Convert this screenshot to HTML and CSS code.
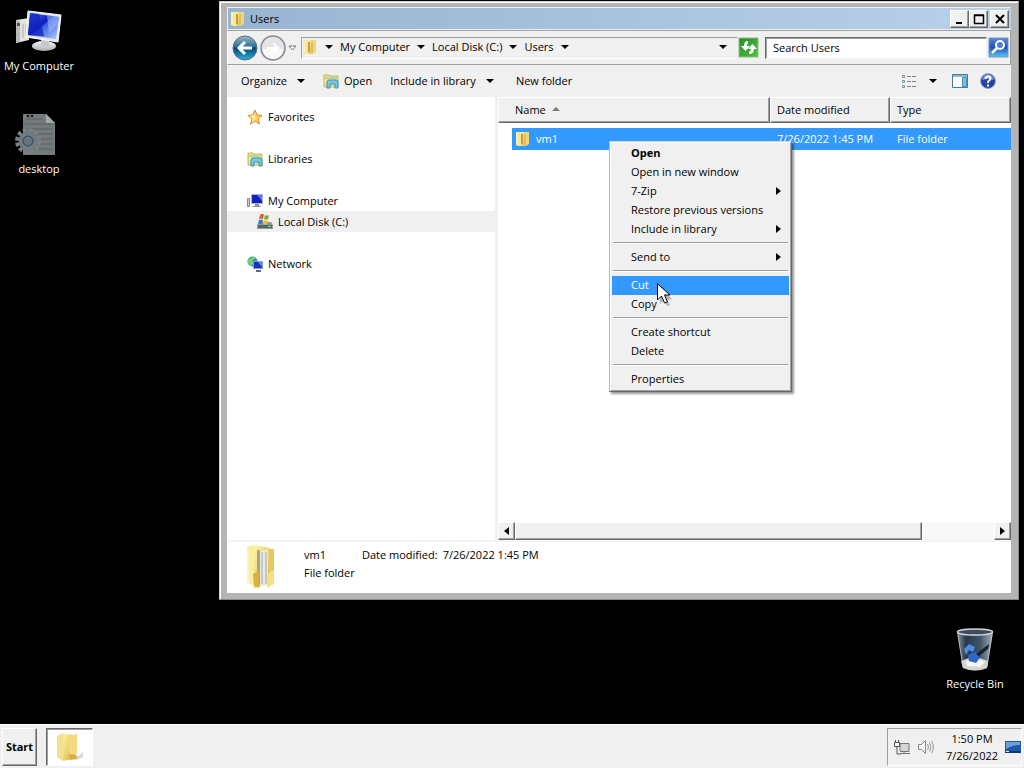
FILE: index.html
```
<!DOCTYPE html>
<html lang="en">
<head>
<meta charset="utf-8">
<title>Users</title>
<link rel="stylesheet" href="styles.css">
</head>
<body>
<svg class="defs" aria-hidden="true">
  <defs>
    <linearGradient id="gold" x1="0" x2="1" y1="0" y2="1"><stop offset="0" stop-color="#fff3a6"/><stop offset=".6" stop-color="#ecd06b"/><stop offset="1" stop-color="#cfa63a"/></linearGradient>
    <linearGradient id="screen" x1="0" x2="1" y1="0" y2="1"><stop offset="0" stop-color="#5c7fe8"/><stop offset=".45" stop-color="#0a18c0"/><stop offset=".5" stop-color="#3a5ee0"/><stop offset="1" stop-color="#b4d4fa"/></linearGradient>
    <linearGradient id="metal" x1="0" x2="0" y1="0" y2="1"><stop offset="0" stop-color="#f8f8f8"/><stop offset="1" stop-color="#a9adb0"/></linearGradient>
    <linearGradient id="back" x1="0" x2="0" y1="0" y2="1"><stop offset="0" stop-color="#9db8c8"/><stop offset=".45" stop-color="#2b6f9b"/><stop offset=".5" stop-color="#07446f"/><stop offset="1" stop-color="#29b4e4"/></linearGradient>
    <linearGradient id="green" x1="0" x2="1" y1="0" y2="1"><stop offset="0" stop-color="#2a8a2c"/><stop offset="1" stop-color="#52c440"/></linearGradient>
    <linearGradient id="find" x1="0" x2="0" y1="0" y2="1"><stop offset="0" stop-color="#5b86d8"/><stop offset=".5" stop-color="#2350b8"/><stop offset="1" stop-color="#58c8ec"/></linearGradient>
    <linearGradient id="glass" x1="0" x2="1" y1="0" y2="0"><stop offset="0" stop-color="#8b99a4"/><stop offset=".25" stop-color="#27384c"/><stop offset=".65" stop-color="#41566a"/><stop offset="1" stop-color="#a9b3ba"/></linearGradient>
  </defs>
  <symbol id="folder" viewBox="0 0 16 16">
    <path d="M1 1h5v14H3l-2-1z" fill="#f7e79a"/><path d="M6 1h5v14H6z" fill="url(#gold)"/><path d="M6 3h2v10H6z" fill="#c69b41"/><path d="M9 1h5v12l-3 2H9z" fill="#f0d677"/><path d="M10 3v11" stroke="#cda64c"/><path d="M2 2v11" stroke="#fffbd6"/>
  </symbol>
  <symbol id="library" viewBox="0 0 16 16">
    <path d="M1 2h5l1 1h8v11H1z" fill="#f0df83" stroke="#c9b75e"/><path d="M2 4h12v2H2z" fill="#a9dba3"/><path d="M2 7h12v2H2z" fill="#f9efb0"/><path d="M4 15V9q0-2 2-2h7q2 0 2 2v6h-3v-4H7v4z" fill="#76c9e5" stroke="#3a8fb5"/>
  </symbol>
  <symbol id="caret" viewBox="0 0 8 4"><path d="M0 0h8L4 4z" fill="currentColor"/></symbol>
  <symbol id="side" viewBox="0 0 5 8"><path d="M0 0v8l5-4z" fill="currentColor"/></symbol>
</svg>

<main class="desktop">
  <div class="shortcuts">
    <a class="shortcut" href="#computer">
      <svg class="shortcut-icon" viewBox="0 0 48 48">
        <path d="M1 11 14 9v22L1 34z" fill="#e3e3df"/><path d="M1 11 5 12v21l-4 1z" fill="#b9b9b5"/><path d="M2 14h3v3H2z" fill="#555"/><path d="M8 15v14M11 15v12" stroke="#aaa"/>
        <ellipse cx="29" cy="37" rx="12" ry="5" fill="url(#metal)"/><path d="M26 30h8v7h-8z" fill="#c5c9cc"/>
        <path d="m13 2 33 4-3 27-32-5z" fill="#e2e5e6" stroke="#fff"/><path d="m15 4 29 4-3 22-28-4z" fill="url(#screen)"/><path d="m15 4 9 1 5 22-16-1z" fill="#1024bd" opacity=".75"/><path d="m32 6 12 2-1 7-9 9z" fill="#a4bdf8" opacity=".55"/>
      </svg>
      <span>My Computer</span>
    </a>
    <a class="shortcut" href="#desktop">
      <svg class="shortcut-icon" viewBox="0 0 48 48">
        <path d="M8 2h23l9 9v32H8z" fill="#747a7b"/><path d="M31 2v9h9z" fill="#a5a9aa"/><path d="M11 4h8M11 7h17M10 12h28M10 17h28M10 22h28M10 27h28M10 32h28M10 37h28" stroke="#5a6062"/><path d="M12 4h2M16 4h2" stroke="#111" stroke-width="2"/>
        <circle cx="13" cy="29" r="11" fill="none" stroke="#788287" stroke-width="4" stroke-dasharray="3.6 2.2"/><circle cx="13" cy="29" r="8" fill="#7e888c" stroke="#6f7a81" stroke-width="3"/><circle cx="13" cy="29" r="5" fill="#6a757b" stroke="#3e5363" stroke-width="1.5"/>
      </svg>
      <span>desktop</span>
    </a>
  </div>

  <a class="shortcut recycle" href="#recycle">
    <svg class="shortcut-icon" viewBox="0 0 48 48">
      <path d="M6 5h36l-6 36q-12 5-24 0z" fill="url(#glass)"/><path d="M10 34q13-7 27 0l-1 7q-12 5-24 0z" fill="#d3d5d4"/><path d="m15 34 8-3 11 4-5 5-13-1z" fill="#f5f5f2"/>
      <path d="m13 22 5-5 6 3-2 5-4-2-3 5z" fill="#4c8ce4"/><path d="m17 28 7-3 3 1 1 6-3 4-7-2z" fill="#2b66c9"/><path d="m25 27 13-10-1 5-9 7z" fill="#17202c"/><ellipse cx="24" cy="5" rx="17.500" ry="3" fill="#3d4d5e" stroke="#cfd6da" stroke-width="1.500"/><path d="m7 8 5 32M41 8l-5 32" stroke="#c9d0d4" opacity=".7"/>
    </svg>
    <span>Recycle Bin</span>
  </a>

  <section class="window" aria-label="Users">
    <header class="titlebar">
      <svg class="icon"><use href="#folder"/></svg>
      <h1>Users</h1>
      <div class="controls">
        <button aria-label="Minimize"><svg viewBox="0 0 12 12"><path d="M2 10h6" stroke="#000" stroke-width="2"/></svg></button>
        <button aria-label="Maximize"><svg viewBox="0 0 12 12"><path d="M1.500 2.500h9v8h-9zM1 2h10" fill="none" stroke="#000" stroke-width="1.500"/></svg></button>
        <button class="close" aria-label="Close"><svg viewBox="0 0 12 12"><path d="m2 2 8 8M10 2l-8 8" stroke="#000" stroke-width="2"/></svg></button>
      </div>
    </header>

    <nav class="address">
      <div class="travel">
        <button aria-label="Back"><svg viewBox="0 0 26 26"><circle cx="13" cy="13" r="12" fill="url(#back)" stroke="#56717f"/><path d="M20 13H7m6-6-6 6 6 6" fill="none" stroke="#fff" stroke-width="3"/></svg></button>
        <button aria-label="Forward"><svg viewBox="0 0 26 26"><circle cx="13" cy="13" r="12" fill="#e3e4e7" stroke="#85878d" stroke-width="1.500"/><path d="M3 14a10 10 0 0 0 20 0z" fill="#f8f8fa"/><path d="M7 13h11m-5-5 5 5-5 5" fill="none" stroke="#fff" stroke-width="2"/></svg></button>
        <button class="recent" aria-label="Recent pages"><svg viewBox="0 0 9 6"><path d="M1 1h7L4.500 5z" fill="#fff" stroke="#777"/></svg></button>
      </div>
      <div class="crumbs">
        <svg class="icon"><use href="#folder"/></svg>
        <button aria-label="Root"><svg class="caret"><use href="#caret"/></svg></button>
        <button>My Computer <svg class="caret"><use href="#caret"/></svg></button>
        <button>Local Disk (C:) <svg class="caret"><use href="#caret"/></svg></button>
        <button>Users <svg class="caret"><use href="#caret"/></svg></button>
        <button class="history" aria-label="Previous locations"><svg class="caret"><use href="#caret"/></svg></button>
      </div>
      <button class="square" aria-label="Refresh"><svg viewBox="0 0 21 21"><path d="M1 1h19v19H1z" fill="url(#green)" stroke="#8bbd83"/><path d="M10 4Q6 4 6 9H3l4.500 5L12 9H9q0-2 1-3zM11 17q5 0 5-5h3l-4.500-5L10 12h3q0 2-2 3z" fill="#fff"/></svg></button>
      <input class="search" type="text" aria-label="Search Users" value="Search Users">
      <button class="square" aria-label="Search"><svg viewBox="0 0 21 21"><path d="M1 1h19v19H1z" fill="url(#find)" stroke="#7895c9"/><circle cx="12" cy="8" r="4" fill="#4f7cd4" stroke="#fff" stroke-width="2"/><path d="m9 11-5 5" stroke="#fff" stroke-width="2.500"/></svg></button>
    </nav>

    <div class="toolbar">
      <button>Organize <svg class="caret"><use href="#caret"/></svg></button>
      <button class="open"><svg class="icon"><use href="#library"/></svg>Open</button>
      <button>Include in library <svg class="caret"><use href="#caret"/></svg></button>
      <button class="new">New folder</button>
      <div class="views">
        <button aria-label="Change view"><svg class="icon" viewBox="0 0 16 16"><path d="M1.500 2.500h2v2h-2zM1.500 7.500h2v2h-2zM1.500 12.500h2v2h-2z" fill="#eee" stroke="#81909a"/><path d="M6 3.500h4m1 0h4M6 8.500h4m1 0h4M6 13.500h4m1 0h4" stroke="#788189"/></svg></button>
        <button class="more" aria-label="More view options"><svg class="caret"><use href="#caret"/></svg></button>
        <button aria-label="Preview pane"><svg class="icon" viewBox="0 0 16 16"><path d="M.5 1.500h15v13H.5z" fill="#fff" stroke="#45769b"/><path d="M1 2h14v2H1z" fill="#93b9d1"/><path d="M10.500 4.500h4v9h-4z" fill="#78bfe1" stroke="#4d91b8"/></svg></button>
        <button aria-label="Help"><svg class="icon" viewBox="0 0 16 16"><circle cx="8" cy="8" r="7.500" fill="#2744a0" stroke="#9aa9cf"/><path d="M2 7a6 6 0 0 1 12 0q-6-2-12 0" fill="#6f8ad2"/><path d="M5.500 6q0-2.500 2.500-2.500t2.500 2q0 1.500-1.500 2.200Q8 8.300 8 10m0 1.500v2" fill="none" stroke="#fff" stroke-width="2"/></svg></button>
      </div>
    </div>

    <div class="panes">
      <nav class="tree">
        <a href="#favorites"><svg class="icon" viewBox="0 0 16 16"><path d="m8 1 2 5 5 .5-4 3.500 1.500 5L8 12l-4.500 3L5 10 1 6.500 6 6z" fill="#ffd453" stroke="#e4842b"/><path d="M8 3v8l-3 2 1-4-3-2 4-1z" fill="#fff0a0"/></svg>Favorites</a>
        <a href="#libraries"><svg class="icon"><use href="#library"/></svg>Libraries</a>
        <a href="#computer"><svg class="icon" viewBox="0 0 16 16"><path d="M.5 5.500h2v8h-2z" fill="#c9cbd0" stroke="#858890"/><path d="M4 1h12v10H4z" fill="#aeb5c8"/><path d="M5 2h10v8H5z" fill="#1420b9"/><path d="M10 2h5v6z" fill="#5a76e8"/><path d="M8 11h4v2H8zM6 13h8v1H6z" fill="#8a92a0"/></svg>My Computer</a>
        <a class="child current" href="#disk"><svg class="icon" viewBox="0 0 16 16"><path d="m2 8 12 0 2 3v4H0v-4z" fill="#8f9ba1"/><path d="M1 11h14v3H1z" fill="#52676d"/><path d="M11 12h3v1h-3z" fill="#82ed58"/><path d="m3 1q2-2 4-.5L6 5Q4 4 2 5z" fill="#e45d2c"/><path d="M8 1q2 1 4 0l-1 4q-2 1-4 0z" fill="#7dae32"/><path d="M2 6q2-1 4 0L5 10Q3 9 1 10z" fill="#3978cf"/><path d="M7 6q2 1 4 0l-1 4q-2 1-4 0z" fill="#f3be2b"/></svg>Local Disk (C:)</a>
        <a href="#network"><svg class="icon" viewBox="0 0 16 16"><circle cx="5.500" cy="5.500" r="5" fill="#2b90b0"/><path d="M1 4q4-5 8-2L5 5l2 2-3 3-3-3z" fill="#7ecb78"/><path d="M6.500 5.500h9v7h-9z" fill="#1831bc" stroke="#8c99c4"/><path d="M11 6h4v5z" fill="#5f8af0"/><path d="M9 14h5v2H9z" fill="#5a6a92"/></svg>Network</a>
      </nav>

      <div class="list">
        <table>
          <colgroup><col><col class="date-col"><col class="type-col"></colgroup>
          <thead>
            <tr><th class="name-head">Name <svg class="sort" viewBox="0 0 8 4"><path d="M0 4h8L4 0z" fill="#777"/></svg></th><th>Date modified</th><th>Type</th></tr>
          </thead>
          <tbody>
            <tr><td class="name-cell"><div><svg class="icon"><use href="#folder"/></svg>vm1</div></td><td><div>7/26/2022 1:45 PM</div></td><td><div>File folder</div></td></tr>
          </tbody>
        </table>
        <div class="scrollbar">
          <button aria-label="Scroll left"><svg class="side flip"><use href="#side"/></svg></button>
          <div class="thumb"></div>
          <div class="track"></div>
          <button aria-label="Scroll right"><svg class="side"><use href="#side"/></svg></button>
        </div>
      </div>
    </div>

    <footer class="details">
      <svg class="preview" viewBox="0 0 36 48">
        <path d="M3 4 10 2v41l-7-4z" fill="#f9ed9e"/><path d="m10 2 16 3v36l-16 4z" fill="url(#gold)"/><path d="m13 7 5 1v33l-5 2z" fill="#a9a283"/><path d="m16 8 8-1v35l-8 2z" fill="#e8e9e5"/><path d="M18 9v32M22 9v32" stroke="#aaa9a1"/><path d="M25 6h5v34l-5 3z" fill="#e4c963"/><path d="m9 31 6-3v17l-5-2z" fill="#d5b340"/><path d="m26 29 4-2v14l-7 4V32z" fill="#f6e17e"/><path d="M4 7v32" stroke="#fffce0"/>
      </svg>
      <div class="facts">
        <div class="fact-row"><span class="file">vm1</span><span>Date modified:</span><span>7/26/2022 1:45 PM</span></div>
        <div>File folder</div>
      </div>
    </footer>
  </section>

  <div class="menu" role="menu">
    <button role="menuitem" class="default">Open</button>
    <button role="menuitem">Open in new window</button>
    <button role="menuitem">7-Zip<svg class="side"><use href="#side"/></svg></button>
    <button role="menuitem">Restore previous versions</button>
    <button role="menuitem">Include in library<svg class="side"><use href="#side"/></svg></button>
    <hr>
    <button role="menuitem">Send to<svg class="side"><use href="#side"/></svg></button>
    <hr>
    <button role="menuitem" class="active">Cut</button>
    <button role="menuitem">Copy</button>
    <hr>
    <button role="menuitem">Create shortcut</button>
    <button role="menuitem">Delete</button>
    <hr>
    <button role="menuitem">Properties</button>
  </div>

  <svg class="pointer" viewBox="0 0 16 24"><path d="m3 4 12 12-5 1 3 5-3 1-3-6-4 4z" fill="#000" opacity=".25"/><path d="M.5.700V17l4-4 3 7 3-1-3-7H13z" fill="#fff" stroke="#000"/></svg>
</main>

<footer class="taskbar">
  <button class="start">Start</button>
  <button class="task" aria-label="Users"><svg viewBox="0 0 32 32"><path d="M3 5 9 2v28l-6-4z" fill="#f3df8d"/><path d="m9 2 9 2v24l-9 2z" fill="url(#gold)"/><path d="m15 5 8-2v20l-8 4z" fill="#f4da7c"/><path d="m18 23 7 2 4-4v5l-7 3z" fill="#bbb" opacity=".6"/><path d="m15 23 7 1 1 4-7 1z" fill="#d7ae40"/></svg></button>
  <div class="tray">
    <button aria-label="Network"><svg class="icon" viewBox="0 0 16 16"><path d="M6 4.500h9v8H6zM6 14.500h10M10 12v2" fill="#d5d5d5" stroke="#737373"/><path d="M.5 3.500h5v4h-5zM1.500 1v3m3-3v3M3 8v7h4" fill="#f7f7f7" stroke="#555"/></svg></button>
    <button aria-label="Volume"><svg class="icon" viewBox="0 0 16 16"><path d="M.5 5.500h3l4-4v13l-4-4h-3z" fill="#f5f5f5" stroke="#858585"/><path d="M9.500 5q2 3 0 6M11.500 3.500q3 4.500 0 9M13.500 2q4 6 0 12" fill="none" stroke="#999"/></svg></button>
    <time class="clock" datetime="2022-07-26T13:50"><span>1:50 PM</span><span>7/26/2022</span></time>
    <button aria-label="Show desktop"><svg class="icon" viewBox="0 0 16 16"><path d="M0 2h16v12H0z" fill="#2258ac"/><path d="M1 3h14v3Q7 6 1 10z" fill="#6f9fdd"/><path d="M0 12h16v2H0z" fill="#17386f"/><path d="M1 12h3v1H1z" fill="#eee"/></svg></button>
  </div>
</footer>
</body>
</html>
```
FILE: styles.css
```
* { box-sizing: border-box; }

body {
  margin: 0;
  min-height: 100vh;
  display: flex;
  flex-direction: column;
  overflow: hidden;
  background: #000;
  color: #000;
  font: 11px/18px "Open Sans", "Noto Sans", sans-serif;
}

button {
  display: flex;
  align-items: center;
  margin: 0;
  padding: 0;
  border: 0;
  background: none;
  color: inherit;
  font: inherit;
  white-space: nowrap;
}

a { color: inherit; text-decoration: none; }
svg { flex: none; display: block; }
.defs { position: absolute; width: 0; height: 0; }
.icon { width: 16px; height: 16px; }
.caret { width: 8px; height: 4px; }
.side { width: 5px; height: 8px; }
.flip { transform: scaleX(-1); }

.desktop { flex: 1; position: relative; }

.shortcuts { display: flex; flex-direction: column; gap: 37px; width: 78px; padding-top: 9px; }
.shortcut { display: flex; flex-direction: column; align-items: center; color: #fff; white-space: nowrap; }
.shortcut-icon { width: 48px; height: 48px; }
.recycle { position: absolute; right: 10px; bottom: 31px; width: 78px; }

/* Explorer window */
.window {
  position: absolute;
  inset: 1px 5px 124px 219px;
  display: flex;
  flex-direction: column;
  padding: 5px 7px 6px;
  border: 1px solid #d4d4d4;
  border-right-color: #888;
  border-bottom-color: #888;
  box-shadow: inset 1px 1px #fff;
  background: #b4b4b4;
}

.titlebar {
  display: flex;
  align-items: center;
  gap: 4px;
  height: 23px;
  padding: 0 2px;
  border: 1px solid #f0f0f0;
  border-right: 0;
  background: linear-gradient(90deg, #99b4d1, #b9d1ea);
}
.titlebar h1 { flex: 1; margin: 0; font: inherit; }
.controls { display: flex; }
.controls button {
  justify-content: center;
  width: 19px;
  height: 18px;
  border: 1px solid;
  border-color: #fff #696969 #696969 #fff;
  box-shadow: inset -1px -1px #a0a0a0;
  background: #f0f0f0;
}
.controls svg { width: 12px; height: 12px; }
.controls .close { margin-left: 2px; }

.address {
  display: flex;
  align-items: center;
  height: 35px;
  padding: 0 1px 0 4px;
  border: 1px solid #a0a0a0;
  border-left-color: #fff;
  background: #f0f0f0;
}
.travel { display: flex; align-items: center; gap: 2px; margin-right: 4px; }
.travel svg { width: 26px; height: 26px; }
.travel .recent svg { width: 9px; height: 6px; }
.crumbs {
  flex: 1;
  display: flex;
  align-items: center;
  gap: 7px;
  height: 22px;
  padding-bottom: 2px;
  border: 1px solid;
  border-color: #a0a0a0 #f0f0f0 #fff #a0a0a0;
}
.crumbs button { gap: 7px; }
.crumbs .history { margin: 0 10px 0 auto; }
.square svg { width: 21px; height: 21px; }
.search {
  width: 222px;
  height: 22px;
  margin: 0 1px 0 6px;
  padding: 0 7px;
  border: 1px solid;
  border-color: #696969 #f0f0f0 #f0f0f0 #696969;
  box-shadow: inset 1px 1px #a0a0a0;
  background: #fff;
  color: #000;
  font: inherit;
}

.toolbar {
  display: flex;
  align-items: center;
  gap: 18px;
  height: 32px;
  padding: 0 15px 0 14px;
  background: #f0f0f0;
}
.toolbar button { gap: 10px; }
.toolbar .open { gap: 5px; }
.toolbar .new { margin-left: 4px; }
.views { display: flex; align-items: center; gap: 12px; margin-left: auto; }
.views .more { margin-right: 3px; }

.panes { flex: 1; display: flex; min-height: 0; background: #fff; }
.tree {
  display: flex;
  flex-direction: column;
  gap: 21px;
  width: 271px;
  padding-top: 9px;
  border-right: 3px solid #f0f0f0;
}
.tree a { display: flex; align-items: center; gap: 5px; height: 21px; padding-left: 20px; }
.tree .child { margin-top: -21px; padding-left: 30px; }
.tree .current { background: #f0f0f0; }

.list { flex: 1; display: flex; flex-direction: column; justify-content: space-between; min-width: 0; }
table { width: 100%; table-layout: fixed; border-spacing: 0; }
.date-col { width: 120px; }
.type-col { width: 121px; }
th {
  height: 26px;
  padding: 0 6px;
  border: 1px solid;
  border-color: #fff #696969 #696969 #fff;
  box-shadow: inset -1px -1px #a0a0a0;
  background: #f0f0f0;
  font-weight: 400;
  text-align: left;
}
.name-head { padding-left: 16px; }
.sort { display: inline-block; width: 8px; height: 4px; margin: 0 0 3px 3px; }
td { padding: 5px 0 0; }
td div { display: flex; align-items: center; gap: 5px; height: 22px; padding-left: 7px; background: #3399ff; color: #fff; }
.name-cell { padding-left: 14px; }
.name-cell div { padding-left: 3px; }

.scrollbar { display: flex; height: 18px; background: #f8f8f8; }
.scrollbar button, .thumb {
  border: 1px solid;
  border-color: #fff #696969 #696969 #fff;
  box-shadow: inset -1px -1px #a0a0a0;
  background: #f0f0f0;
}
.scrollbar button { justify-content: center; width: 17px; }
.thumb { flex: 17; }
.track { flex: 3; }

.details { display: flex; gap: 24px; height: 53px; padding: 1px 17px; border-top: 2px solid #f4f4f4; background: #fff; }
.preview { width: 36px; height: 48px; }
.facts { padding-top: 3px; }
.fact-row { display: flex; gap: 5px; }
.file { width: 53px; }

/* Context menu */
.menu {
  position: absolute;
  left: 609px;
  top: 141px;
  width: 183px;
  padding: 2px;
  border: 1px solid;
  border-color: #d4d4d4 #696969 #696969 #b8b8b8;
  box-shadow: inset 1px 1px #fff, inset -1px -1px #a0a0a0, 2px 2px 2px #0006;
  background: #f0f0f0;
}
.menu button { justify-content: space-between; width: 100%; height: 19px; padding: 0 8px 2px 19px; }
.menu .default { font-weight: 700; }
.menu .active { background: #3399ff; color: #fff; }
.menu hr { height: 2px; margin: 3px 1px 4px; border: 0; border-top: 1px solid #a0a0a0; background: #fff; }
.pointer { position: absolute; left: 657px; top: 283px; width: 16px; height: 24px; }

/* Taskbar */
.taskbar {
  display: flex;
  align-items: center;
  gap: 9px;
  height: 44px;
  padding: 0 2px;
  border-top: 1px solid #fff;
  background: #f0f0f0;
}
.start {
  justify-content: center;
  width: 35px;
  height: 38px;
  border: 1px solid;
  border-color: #fff #696969 #696969 #fff;
  box-shadow: inset -1px -1px #a0a0a0;
  font-weight: 700;
}
.task {
  justify-content: center;
  width: 47px;
  height: 38px;
  border: 1px solid;
  border-color: #696969 #fff #fff #696969;
  box-shadow: inset 1px 1px #a0a0a0;
  background: #fff;
}
.task svg { width: 32px; height: 32px; }
.tray {
  display: flex;
  align-items: center;
  gap: 8px;
  height: 38px;
  margin-left: auto;
  padding-left: 6px;
  border: 1px solid;
  border-color: #a0a0a0 #fff #fff #a0a0a0;
}
.clock { display: flex; flex-direction: column; align-items: center; width: 60px; margin-right: -5px; line-height: 17px; }
```
